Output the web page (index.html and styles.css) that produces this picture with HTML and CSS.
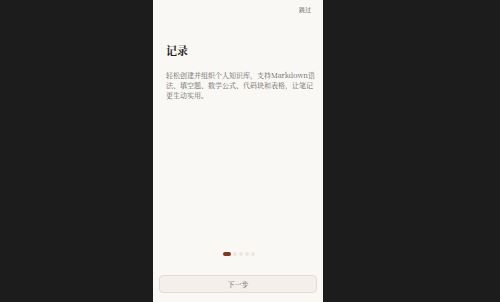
FILE: index.html
```html
<!DOCTYPE html>
<html lang="zh">
<head>
<meta charset="utf-8">
<link rel="stylesheet" href="styles.css">
</head>
<body>
<div class="phone">
  <div class="topbar"><span class="skip">跳过</span></div>
  <div class="content">
    <h1 class="title">记录</h1>
    <p class="desc">轻松创建并组织个人知识库，支持Markdown语法、填空题、数学公式、代码块和表格，让笔记更生动实用。</p>
  </div>
  <div class="dots">
    <span class="dot active"></span>
    <span class="dot"></span>
    <span class="dot"></span>
    <span class="dot"></span>
    <span class="dot"></span>
  </div>
  <div class="footer">
    <button class="next">下一步</button>
  </div>
</div>
</body>
</html>
```
FILE: styles.css
```css
html, body {
  margin: 0;
  padding: 0;
  height: 100%;
}
body {
  background: #1c1c1c;
  display: flex;
  justify-content: flex-start;
  padding-left: 153px;
  box-sizing: border-box;
  font-family: "Noto Serif CJK SC", "Noto Sans CJK SC", serif;
}
.phone {
  width: 170px;
  height: 302px;
  background: #faf8f4;
  display: flex;
  flex-direction: column;
}
.topbar {
  display: flex;
  justify-content: flex-end;
  padding: 6px 12px 0 0;
  height: 14px;
}
.skip {
  font-size: 6px;
  color: #555;
  line-height: 8px;
}
.content {
  flex: 1;
  padding: 0 8px 0 13px;
}
.title {
  margin: 22px 0 0 0;
  font-size: 11px;
  line-height: 16px;
  font-weight: 700;
  color: #222;
}
.desc {
  margin: 12px 0 0 0;
  font-size: 7px;
  line-height: 10px;
  color: #666;
}
.dots {
  display: flex;
  justify-content: center;
  gap: 2px;
  padding-bottom: 13px;
  margin-left: 2px;
}
.dot {
  width: 4px;
  height: 4px;
  border-radius: 2px;
  background: #ece6e0;
}
.dot.active {
  width: 8px;
  background: #8a3516;
}
.footer {
  padding: 0 6px 9px 6px;
}
.next {
  width: 100%;
  height: 18px;
  border: 1px solid #e4dcd3;
  border-radius: 4px;
  background: #f4efea;
  color: #555;
  font-family: inherit;
  font-size: 7px;
  padding: 0;
}
```
